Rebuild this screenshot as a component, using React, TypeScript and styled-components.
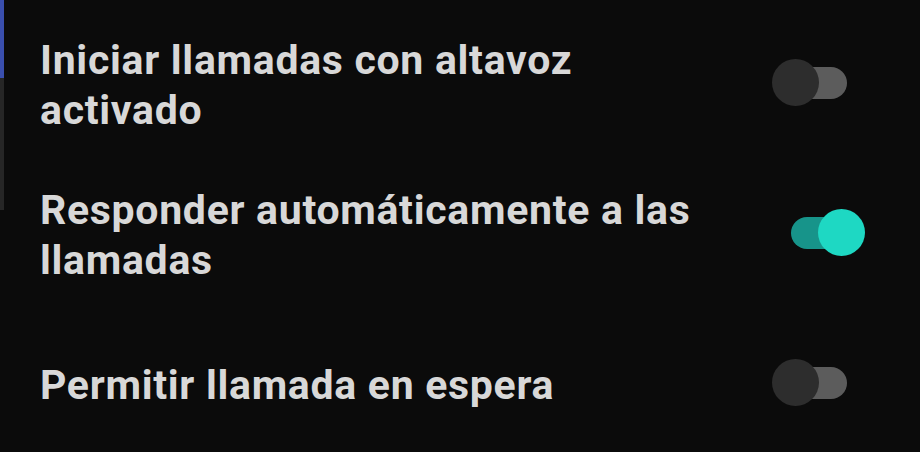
import styled, { createGlobalStyle } from "styled-components";

const GlobalStyle = createGlobalStyle`
  html, body {
    margin: 0;
    padding: 0;
    background: #0b0b0b;
  }
  #root {
    width: 920px;
    height: 452px;
    overflow: hidden;
  }
`;

const Screen = styled.div`
  display: flex;
  width: 920px;
  height: 452px;
  background: #0b0b0b;
  font-family: Roboto, "Noto Sans", sans-serif;
  overflow: hidden;
`;

// thin edge on the left (status of the previous panel)
const Edge = styled.div`
  display: flex;
  flex-direction: column;
  width: 4px;
  flex-shrink: 0;
`;

const EdgePart = styled.div<{ $color: string; $height: number }>`
  height: ${(p) => p.$height}px;
  background: ${(p) => p.$color};
`;

const List = styled.div`
  flex: 1;
  display: flex;
  flex-direction: column;
  padding: 10px 55px 0 36px;
`;

const Row = styled.div`
  display: flex;
  align-items: center;
  justify-content: space-between;
  gap: 60px;
  min-height: 150px;
`;

const Label = styled.div`
  flex: 1;
  color: #d8d8d8;
  font-size: 41px;
  font-weight: 700;
  line-height: 50px;
  letter-spacing: 0.7px;
`;

const SwitchBox = styled.div`
  position: relative;
  width: 93px;
  height: 47px;
  flex-shrink: 0;
  margin-top: -5px;
`;

const Track = styled.div<{ $on: boolean }>`
  position: absolute;
  left: 19px;
  top: 8px;
  width: 56px;
  height: 32px;
  border-radius: 16px;
  background: ${(p) => (p.$on ? "#17948a" : "#5c5c5c")};
`;

const Thumb = styled.div<{ $on: boolean }>`
  position: absolute;
  top: 0;
  left: ${(p) => (p.$on ? "46px" : "0")};
  width: 47px;
  height: 47px;
  border-radius: 50%;
  background: ${(p) => (p.$on ? "#1ed8c3" : "#2d2d2d")};
`;

const Toggle = ({ on }: { on: boolean }) => (
  <SwitchBox>
    <Track $on={on} />
    <Thumb $on={on} />
  </SwitchBox>
);

const SETTINGS = [
  { label: "Iniciar llamadas con altavoz activado", on: false },
  { label: "Responder automáticamente a las llamadas", on: true },
  { label: "Permitir llamada en espera", on: false },
];

const App = () => {
  return (
    <>
      <GlobalStyle />
      <Screen>
        <Edge>
          <EdgePart $color="#3a4fae" $height={78} />
          <EdgePart $color="#262626" $height={132} />
        </Edge>
        <List>
          {SETTINGS.map((s) => (
            <Row key={s.label}>
              <Label>{s.label}</Label>
              <Toggle on={s.on} />
            </Row>
          ))}
        </List>
      </Screen>
    </>
  );
};

export default App;
